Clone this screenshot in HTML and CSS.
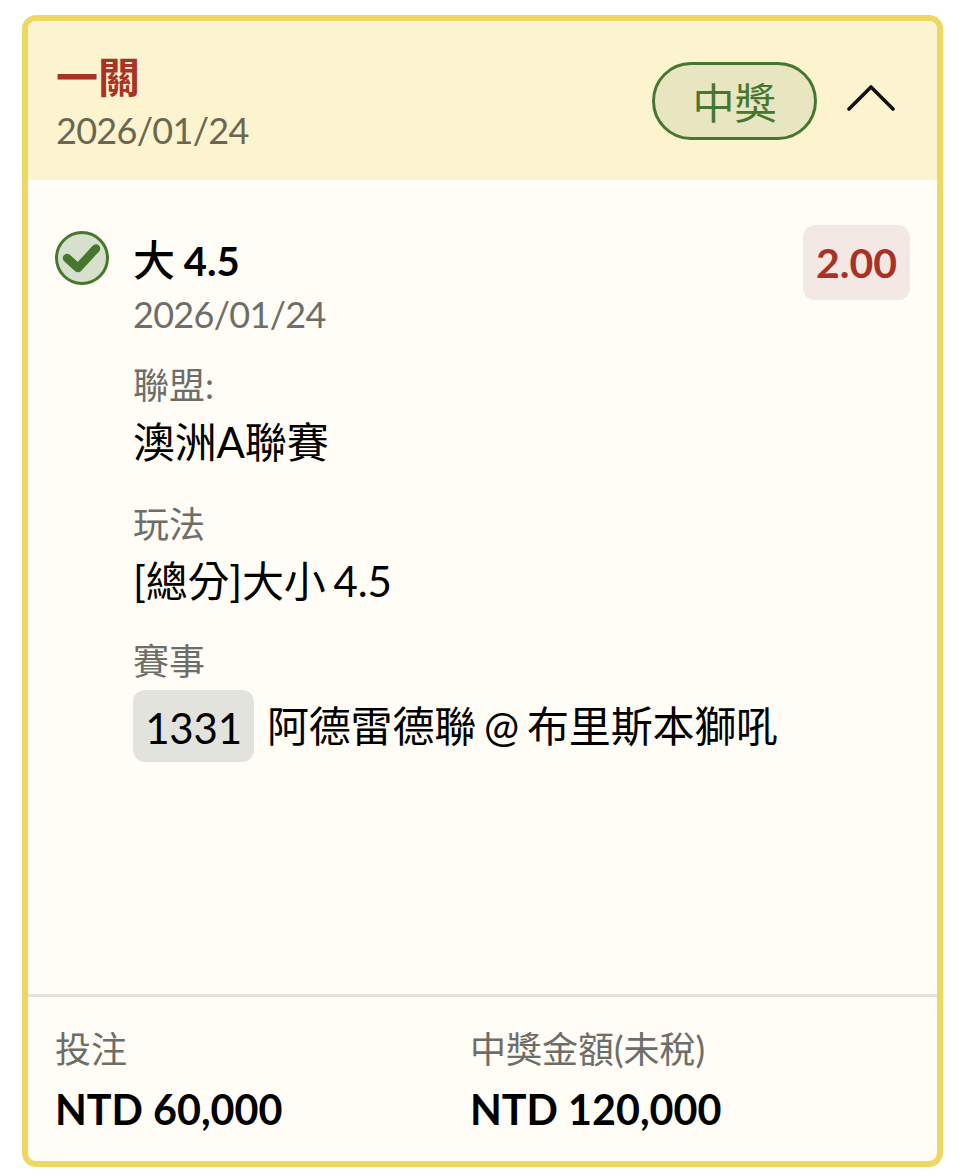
FILE: index.html
```html
<!DOCTYPE html>
<html lang="zh-Hant">
<head>
   <meta charset="UTF-8" />
   <meta name="viewport" content="width=device-width, initial-scale=1.0"/>
   <title>一關</title>
   <link rel="stylesheet" href="styles.css">
</head>
<body>

   <div class="card">
      <div class="card-head">
         <div>
            <h2 class="head-title">一關</h2>
            <p class="head-date">2026/01/24</p>
         </div>
         <div class="head-right">
            <span class="status">中獎</span>
            <svg class="chevron" width="48" height="30" viewBox="0 0 48 30">
               <path d="M2 26 L24 4 L46 26" fill="none" stroke="#111" stroke-width="3.6" stroke-linecap="round" stroke-linejoin="round"/>
            </svg>
         </div>
      </div>

      <div class="card-body">
         <svg class="check" width="56" height="56" viewBox="0 0 56 56">
            <circle cx="28" cy="28" r="25.5" fill="#d6e0cc" stroke="#47762f" stroke-width="3"/>
            <path d="M13 28 L24 38 L42 18.5" fill="none" stroke="#47762f" stroke-width="8.5" stroke-linecap="round" stroke-linejoin="round"/>
         </svg>
         <div class="bet">
            <div class="bet-top">
               <div>
                  <p class="bet-name"><span class="bet-side">大</span> 4.5</p>
                  <p class="bet-date">2026/01/24</p>
               </div>
               <span class="odds">2.00</span>
            </div>

            <div class="field">
               <p class="field-label">聯盟:</p>
               <p class="field-value">澳洲A聯賽</p>
            </div>
            <div class="field">
               <p class="field-label">玩法</p>
               <p class="field-value">[總分]大小 4.5</p>
            </div>
            <div class="field field-match">
               <p class="field-label">賽事</p>
               <p class="field-value match"><span class="match-no">1331</span>阿德雷德聯 @ 布里斯本獅吼</p>
            </div>
         </div>
      </div>

      <div class="card-foot">
         <div class="total">
            <p class="total-label">投注</p>
            <p class="total-value">NTD 60,000</p>
         </div>
         <div class="total">
            <p class="total-label">中獎金額(未稅)</p>
            <p class="total-value">NTD 120,000</p>
         </div>
      </div>
   </div>

</body>
</html>
```

FILE: styles.css
```css
* {
   margin: 0;
   padding: 0;
   box-sizing: border-box;
}
body {
   padding: 15px 21px 9px 22px;
   background-color: #fff;
   font-family: Lato, "Noto Sans CJK TC", sans-serif;
   color: #000;
}
.card {
   display: flex;
   flex-direction: column;
   height: 1152px;
   border: 6px solid #efd861;
   border-radius: 14px;
   background-color: #fffdf5;
   overflow: hidden;
}
.card-head {
   display: flex;
   justify-content: space-between;
   align-items: center;
   height: 159px;
   padding: 2px 42px 0 28px;
   background-color: #fcf3cf;
}
.head-title {
   font-size: 42px;
   line-height: 54px;
   font-weight: 700;
   color: #a93226;
}
.head-date {
   margin-top: 3px;
   font-size: 36px;
   line-height: 46px;
   letter-spacing: -0.7px;
   color: #6b6650;
}
.head-right {
   display: flex;
   align-items: center;
   gap: 30px;
   margin-top: -2px;
}
.status {
   display: flex;
   align-items: center;
   justify-content: center;
   width: 165px;
   height: 78px;
   border: 3px solid #47762f;
   border-radius: 39px;
   background-color: #e8e6c0;
   font-size: 42px;
   color: #47762f;
}
.chevron {
   margin-top: -6px;
}
.card-body {
   flex: 1;
   display: flex;
   gap: 23px;
   padding: 50px 27px 0 26px;
}
.check {
   flex-shrink: 0;
}
.bet {
   flex: 1;
}
.bet-top {
   display: flex;
   justify-content: space-between;
   align-items: flex-start;
   margin: -5px 0 -2px;
}
.bet-name {
   margin-top: 7px;
   font-size: 40px;
   line-height: 56px;
   font-weight: 700;
   word-spacing: -1px;
}
.bet-side {
   font-size: 42px;
   font-weight: 500;
}
.bet-date {
   font-size: 36px;
   line-height: 50px;
   letter-spacing: -0.7px;
   color: #6d6d69;
}
.odds {
   width: 107px;
   height: 75px;
   line-height: 76px;
   text-align: center;
   border-radius: 12px;
   background-color: #f3e8e3;
   font-size: 41px;
   font-weight: 700;
   color: #a93226;
}
.field {
   margin-top: 24px;
}
.field-match {
   margin-top: 22px;
}
.field-label {
   font-size: 36px;
   line-height: 48px;
   color: #6d6d69;
}
.field-value {
   font-size: 42px;
   line-height: 67px;
   letter-spacing: -0.2px;
   word-spacing: -2.5px;
}
.match {
   display: flex;
   align-items: center;
   margin-top: 5px;
   line-height: 70px;
}
.match-no {
   width: 121px;
   height: 72px;
   margin-right: 13px;
   line-height: 76px;
   text-align: center;
   border-radius: 12px;
   background-color: #e3e3de;
}
.card-foot {
   display: flex;
   height: 167px;
   padding: 28px 27px 0;
   border-top: 3px solid #e3e3de;
}
.total {
   width: 415px;
}
.total-label {
   font-size: 36px;
   line-height: 48px;
   color: #6d6d69;
}
.total-value {
   margin-top: 10px;
   font-size: 41.3px;
   line-height: 52px;
   font-weight: 700;
}
```
